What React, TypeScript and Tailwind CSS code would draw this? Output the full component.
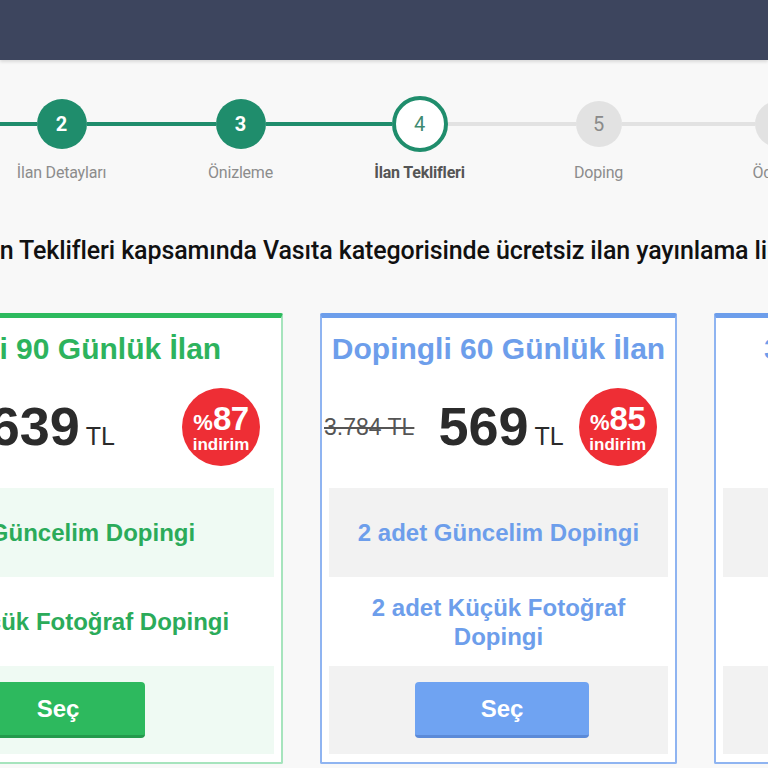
import React from "react";

type Step = { n: number; label: string; state: "done" | "active" | "todo" };

const steps: Step[] = [
  { n: 1, label: "Kategori Seçimi", state: "done" },
  { n: 2, label: "İlan Detayları", state: "done" },
  { n: 3, label: "Önizleme", state: "done" },
  { n: 4, label: "İlan Teklifleri", state: "active" },
  { n: 5, label: "Doping", state: "todo" },
  { n: 6, label: "Ödeme", state: "todo" },
];

function StepSlot({ s, i }: { s: Step; i: number }) {
  const leftGreen = s.state !== "todo";
  const rightGreen = s.state === "done";
  const first = i === 0;
  const last = i === steps.length - 1;
  return (
    <div className="w-[179px] shrink-0 flex flex-col items-center">
      <div className="w-full h-[56px] flex items-center">
        <div
          className={
            "flex-1 h-[4px] " +
            (first ? "bg-transparent" : leftGreen ? "bg-[#1f8d6c]" : "bg-[#e2e2e2]")
          }
        />
        {s.state === "done" && (
          <div className="w-[50px] h-[50px] rounded-full bg-[#1f8d6c] flex items-center justify-center text-white font-bold text-[20px] font-['Roboto',sans-serif]">
            {s.n}
          </div>
        )}
        {s.state === "active" && (
          <div className="w-[56px] h-[56px] rounded-full border-[4px] border-[#1f8d6c] bg-white flex items-center justify-center text-[#3e8a70] text-[20px] font-['Roboto',sans-serif]">
            {s.n}
          </div>
        )}
        {s.state === "todo" && (
          <div className="w-[46px] h-[46px] rounded-full bg-[#e2e2e2] flex items-center justify-center text-[#8a8a8a] text-[20px] font-['Roboto',sans-serif]">
            {s.n}
          </div>
        )}
        <div
          className={
            "flex-1 h-[4px] " +
            (last ? "bg-transparent" : rightGreen ? "bg-[#1f8d6c]" : "bg-[#e2e2e2]")
          }
        />
      </div>
      <div
        className={
          "mt-[9px] text-[16px] leading-[24px] font-['Roboto',sans-serif] tracking-[-0.2px] whitespace-nowrap " +
          (s.state === "active" ? "text-[#555] font-bold" : "text-[#8c8c8c]")
        }
      >
        {s.label}
      </div>
    </div>
  );
}

function Badge({ pct }: { pct: string }) {
  return (
    <div className="w-[78px] h-[78px] shrink-0 rounded-full bg-[#ee2e35] flex flex-col items-center justify-center text-white font-bold font-['Liberation_Sans',Arial,sans-serif]">
      <div className="leading-none flex items-baseline">
        <span className="text-[22px]">%</span>
        <span className="text-[33px] tracking-[-0.5px]">{pct}</span>
      </div>
      <div className="text-[17px] leading-none mt-[1px]">indirim</div>
    </div>
  );
}

type Theme = {
  title: string;
  border: string;
  top: string;
  rowBg: string;
  text: string;
  btn: string;
};

const green: Theme = {
  title: "text-[#2db35d]",
  border: "border-[#a6e4bd]",
  top: "border-t-[#2dba5e]",
  rowBg: "bg-[#effaf3]",
  text: "text-[#2bab5a]",
  btn: "bg-[#2db95e] border-b-[#239a4c]",
};

const blue: Theme = {
  title: "text-[#6d9eeb]",
  border: "border-[#8fb4f1]",
  top: "border-t-[#6d9eeb]",
  rowBg: "bg-[#f2f2f2]",
  text: "text-[#6d9eeb]",
  btn: "bg-[#6fa3f2] border-b-[#5b8ad8]",
};

function Card({
  width,
  theme,
  title,
  oldPrice,
  price,
  pct,
  priceRowClass,
  features,
}: {
  width: string;
  theme: Theme;
  title: string;
  oldPrice: string;
  price: string;
  pct: string;
  priceRowClass: string;
  features: [string, string];
}) {
  return (
    <div
      className={
        width +
        " shrink-0 bg-white border-[2px] border-t-[5px] rounded-[2px] flex flex-col font-['Liberation_Sans',Arial,sans-serif] " +
        theme.border +
        " " +
        theme.top
      }
    >
      <div className={"pt-[14px] text-center font-bold text-[30px] leading-[34px] whitespace-nowrap " + theme.title}>
        {title}
      </div>
      <div className={"mt-[22px] h-[78px] flex items-center " + priceRowClass}>
        {oldPrice && (
          <span className="text-[23px] text-[#555] line-through whitespace-nowrap mr-[24px]">{oldPrice}</span>
        )}
        <div className="flex items-baseline text-[#2b2b2b] whitespace-nowrap">
          <span className="text-[54px] font-bold leading-none">{price}</span>
          <span className="text-[25px] ml-[6px]">TL</span>
        </div>
        <div className="ml-[15px] price-badge">
          <Badge pct={pct} />
        </div>
      </div>
      <div className="mt-[22px] px-[7px] pb-[8px] flex flex-col">
        <div className={"h-[89px] flex items-center justify-center text-center font-bold text-[24px] leading-[29px] px-[16px] " + theme.rowBg + " " + theme.text}>
          {features[0]}
        </div>
        <div className={"h-[89px] flex items-center justify-center text-center font-bold text-[24px] leading-[29px] px-[30px] bg-white " + theme.text}>
          {features[1]}
        </div>
        <div className={"h-[88px] flex items-center justify-center " + theme.rowBg}>
          <button
            className={
              "ml-[7px] w-[174px] h-[56px] rounded-[4px] border-b-[3px] text-white font-bold text-[24px] " + theme.btn
            }
          >
            Seç
          </button>
        </div>
      </div>
    </div>
  );
}

export default function App() {
  return (
    <div className="w-[768px] h-[768px] overflow-hidden bg-[#f8f8f8] relative">
      <div className="h-[60px] bg-[#3d455e] shadow-[0_2px_3px_rgba(0,0,0,0.12)]" />
      <div className="mt-[36px] flex -ml-[207px]">
        {steps.map((s, i) => (
          <StepSlot key={s.n} s={s} i={i} />
        ))}
      </div>
      <div className="mt-[51px] -ml-[27px] whitespace-nowrap text-[25px] leading-[30px] font-medium text-[#111] font-['Roboto',sans-serif] tracking-[-0.1px]">
        İlan Teklifleri kapsamında Vasıta kategorisinde ücretsiz ilan yayınlama limitiniz dolmuştur.
      </div>
      <div className="mt-[47px] flex gap-[37px] -ml-[174px] items-start">
        <Card
          width="w-[457px]"
          theme={green}
          title="Dopingli 90 Günlük İlan"
          oldPrice="12.608 TL"
          price="1.639"
          pct="87"
          priceRowClass="justify-end pr-[21px] [&_.price-badge]:ml-[67px]"
          features={["2 adet Güncelim Dopingi", "2 adet Küçük Fotoğraf Dopingi"]}
        />
        <Card
          width="w-[357px]"
          theme={blue}
          title="Dopingli 60 Günlük İlan"
          oldPrice="3.784 TL"
          price="569"
          pct="85"
          priceRowClass="justify-start pl-[2px]"
          features={["2 adet Güncelim Dopingi", "2 adet Küçük Fotoğraf Dopingi"]}
        />
        <Card
          width="w-[305px]"
          theme={blue}
          title="30 Günlük İlan"
          oldPrice=""
          price="249"
          pct="80"
          priceRowClass="justify-end pr-[22px]"
          features={["Dopingsiz", "Standart İlan"]}
        />
      </div>
    </div>
  );
}
